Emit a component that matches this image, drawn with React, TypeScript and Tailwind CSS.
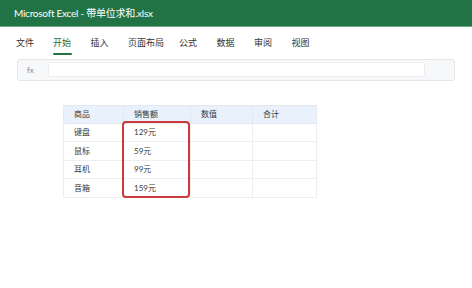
import React from 'react';

const tabs = ['文件', '开始', '插入', '页面布局', '公式', '数据', '审阅', '视图'];

const rows = [
  { name: '键盘', price: '129元' },
  { name: '鼠标', price: '59元' },
  { name: '耳机', price: '99元' },
  { name: '音箱', price: '159元' },
];

export default function App() {
  return (
    <div
      className="w-[472px] h-[288px] bg-white overflow-hidden"
      style={{ fontFamily: 'Lato, "Noto Sans CJK SC", sans-serif' }}
    >
      {/* title bar */}
      <div className="h-[27px] bg-[#217346] flex items-center px-[14px] border-b border-[#6aa883]">
        <span className="text-white text-[10px] tracking-tight">Microsoft Excel - 带单位求和.xlsx</span>
      </div>

      {/* ribbon tabs */}
      <div className="flex pl-[16px] pt-[9px] text-[9px] text-[#333]">
        {tabs.map((t, i) => (
          <div key={t} className={`flex flex-col items-start ${i === 0 ? 'w-[37px]' : 'w-[37.5px]'} ${t === '页面布局' ? 'w-[51px]' : ''}`}>
            <span className={i === 1 ? 'text-[#217346]' : ''}>{t}</span>
            <div className={`h-[2px] w-[19px] mt-[3px] rounded ${i === 1 ? 'bg-[#217346]' : 'bg-transparent'}`} />
          </div>
        ))}
      </div>

      {/* formula bar */}
      <div className="mx-[17px] mt-[4px] h-[22px] bg-[#f7f8fa] border border-[#e4e6ea] rounded-[3px] flex items-center">
        <span className="w-[30px] pl-[9px] text-[8px] text-[#888]">fx</span>
        <div className="w-[377px] h-[15px] bg-white border border-[#eceef1] rounded-[2px]" />
      </div>

      {/* sheet */}
      <div className="relative ml-[63px] mt-[24px] w-[253px] text-[8px] text-[#3a3a3a]">
        <table className="w-full border-collapse table-fixed">
          <colgroup>
            <col className="w-[60px]" />
            <col className="w-[67px]" />
            <col className="w-[62px]" />
            <col className="w-[64px]" />
          </colgroup>
          <thead>
            <tr className="h-[18px] bg-[#e8f1fc]">
              {['商品', '销售额', '数值', '合计'].map((h) => (
                <th key={h} className="font-normal text-left pl-[10px] border border-[#e3e8ee]">{h}</th>
              ))}
            </tr>
          </thead>
          <tbody>
            {rows.map((r) => (
              <tr key={r.name} className="h-[18.5px]">
                <td className="pl-[10px] border border-[#eceef1]">{r.name}</td>
                <td className="pl-[10px] border border-[#eceef1]">{r.price}</td>
                <td className="border border-[#eceef1]" />
                <td className="border border-[#eceef1]" />
              </tr>
            ))}
          </tbody>
        </table>
        {/* highlight */}
        <div className="absolute left-[59px] top-[16px] w-[68px] h-[77px] border-2 border-[#cc3b3b] rounded-[4px]" />
      </div>
    </div>
  );
}
